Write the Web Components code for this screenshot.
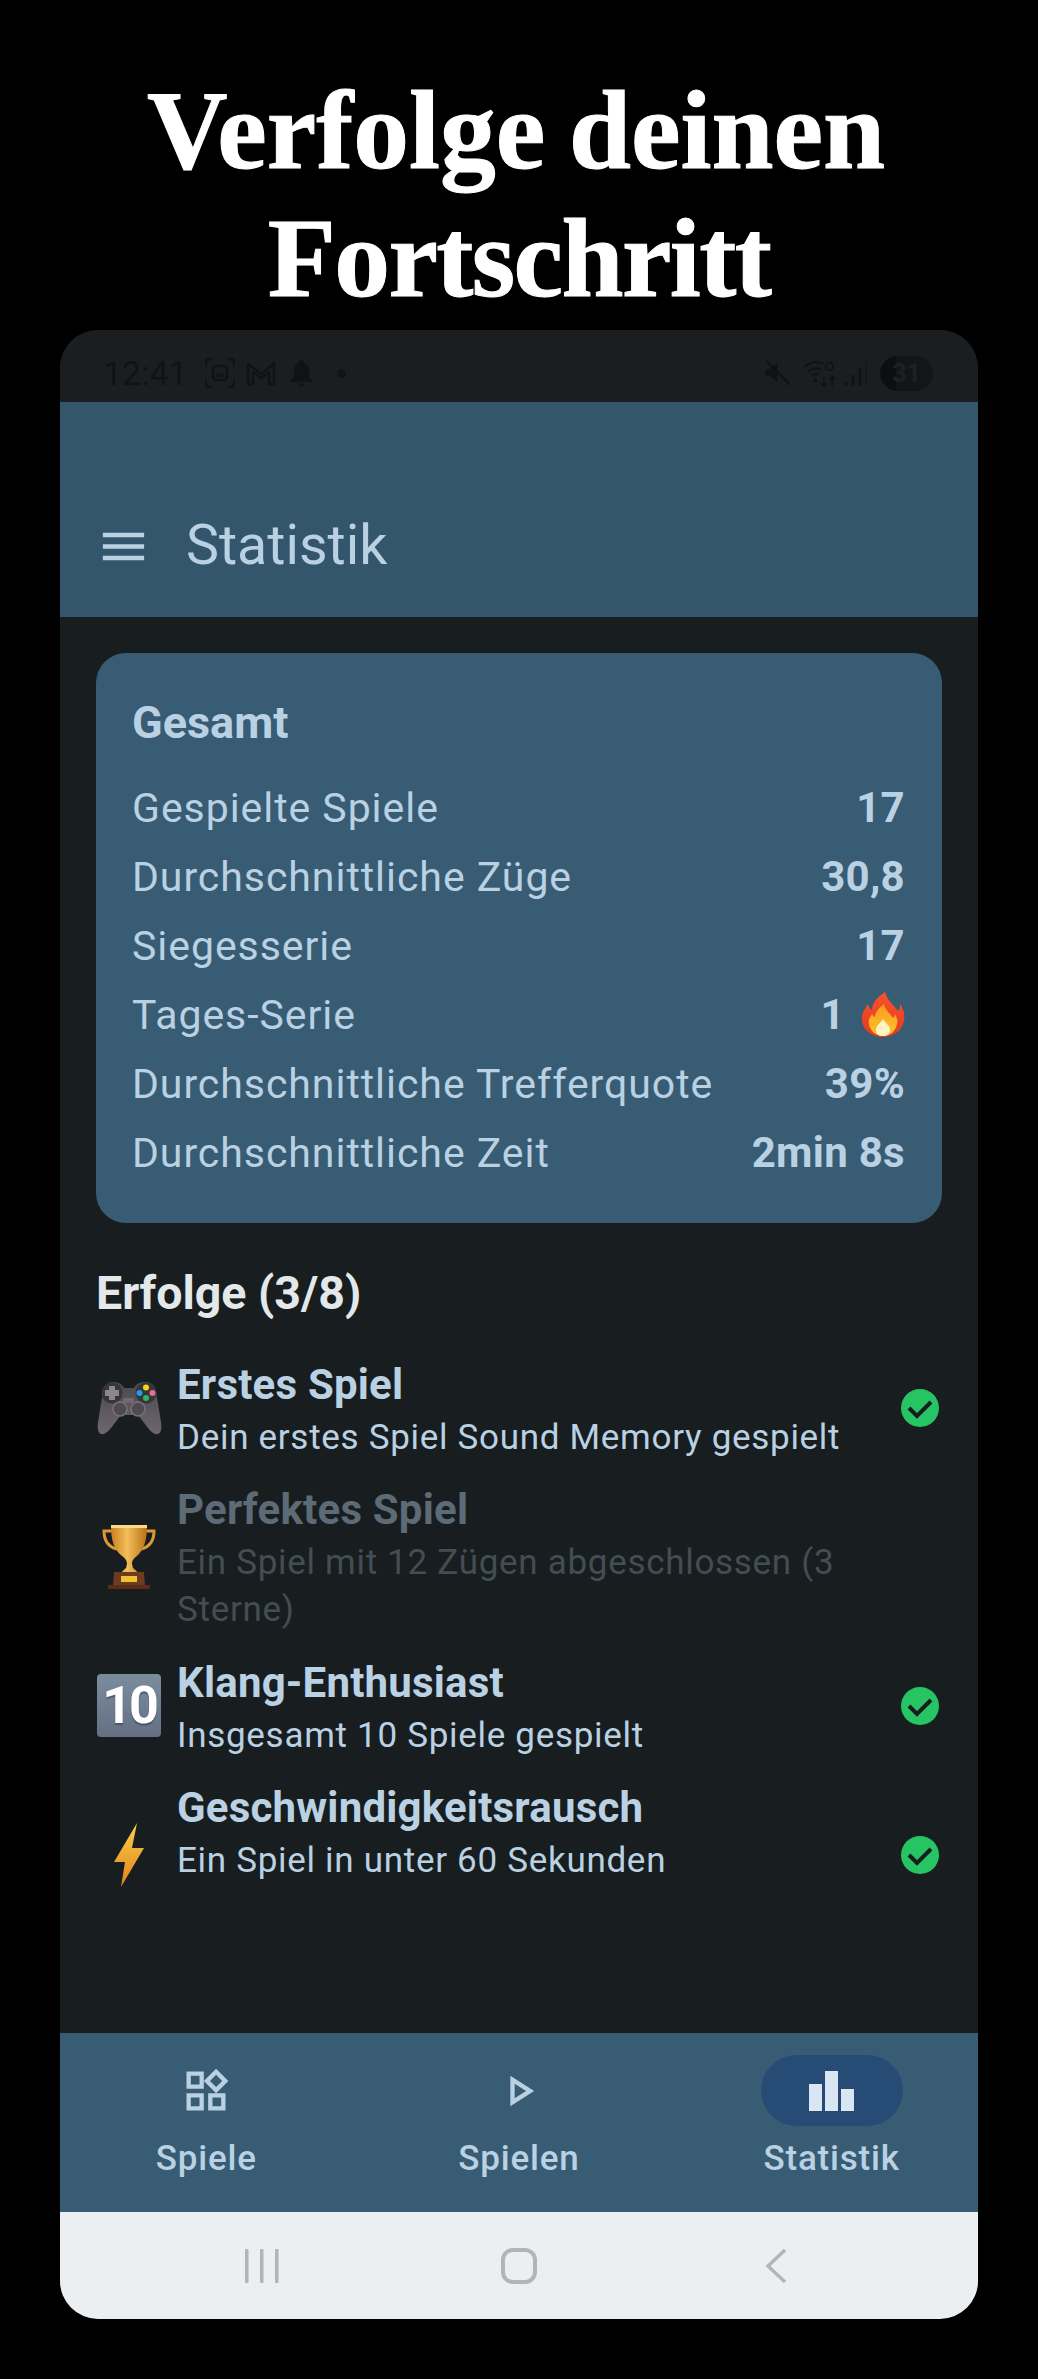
<!DOCTYPE html>
<html lang="de">
<head>
<meta charset="utf-8">
<title>Statistik</title>
<style>
    html, body { margin: 0; padding: 0; background: #000; }
    body { font-family: Roboto, "Liberation Sans", sans-serif; }
</style>
</head>
<body>
<promo-page>
    <promo-title slot="title"><span style="padding-right:6px">Verfolge deinen</span><br><span style="letter-spacing:-1.6px">Fortschritt</span></promo-title>
    <phone-frame>
        <status-bar slot="status"></status-bar>
        <app-bar slot="top" heading="Statistik"></app-bar>

        <stat-card heading="Gesamt">
            <stat-row label="Gespielte Spiele">17</stat-row>
            <stat-row label="Durchschnittliche Züge">30,8</stat-row>
            <stat-row label="Siegesserie">17</stat-row>
            <stat-row label="Tages-Serie">1 <emoji-icon name="fire"></emoji-icon></stat-row>
            <stat-row label="Durchschnittliche Trefferquote">39%</stat-row>
            <stat-row label="Durchschnittliche Zeit">2min 8s</stat-row>
        </stat-card>

        <achievement-list heading="Erfolge (3/8)">
            <achievement-item icon="gamepad" heading="Erstes Spiel" done>Dein erstes Spiel Sound Memory gespielt</achievement-item>
            <achievement-item icon="trophy" heading="Perfektes Spiel" locked>Ein Spiel mit 12 Zügen abgeschlossen (3 Sterne)</achievement-item>
            <achievement-item icon="ten" heading="Klang-Enthusiast" done>Insgesamt 10 Spiele gespielt</achievement-item>
            <achievement-item icon="bolt" heading="Geschwindigkeitsrausch" done tall>Ein Spiel in unter 60 Sekunden</achievement-item>
        </achievement-list>

        <bottom-nav slot="nav">
            <nav-item icon="widgets">Spiele</nav-item>
            <nav-item icon="play">Spielen</nav-item>
            <nav-item icon="bars" active>Statistik</nav-item>
        </bottom-nav>
        <system-nav slot="system"></system-nav>
    </phone-frame>
</promo-page>

<script>
// small helper, every component is just a template + open shadow root
function shadow(el, html) {
    let template = document.createElement('template');
    template.innerHTML = html;
    let root = el.attachShadow({mode: 'open'});
    root.appendChild(template.content.cloneNode(true));
    return root;
}

class PromoPage extends HTMLElement {
    constructor() {
        super();
        shadow(this, `
<style>
    :host { display:block; width:1038px; height:2379px; background:#000; overflow:hidden; }
    .phone { padding:0 60px; }
</style>
<slot name="title"></slot>
<div class="phone"><slot></slot></div>
`);
    }
}

class PromoTitle extends HTMLElement {
    constructor() {
        super();
        shadow(this, `
<style>
    :host {
        display:block;
        height:330px;
        box-sizing:border-box;
        padding-top:67px;
        text-align:center;
        color:#fff;
        font-family:"Liberation Serif", serif;
        font-weight:700;
        font-size:111.5px;
        line-height:128px;
        word-spacing:-4px;
        -webkit-text-stroke:1px #fff;
    }
</style>
<slot></slot>
`);
    }
}

class PhoneFrame extends HTMLElement {
    constructor() {
        super();
        shadow(this, `
<style>
    :host {
        display:flex;
        flex-direction:column;
        height:1989px;
        background:#181d1f;
        border-radius:38px;
        overflow:hidden;
    }
    .content {
        flex:1;
        min-height:0;
        padding:36px 36px 0;
        display:flex;
        flex-direction:column;
    }
</style>
<slot name="status"></slot>
<slot name="top"></slot>
<div class="content"><slot></slot></div>
<slot name="nav"></slot>
<slot name="system"></slot>
`);
    }
}

class StatusBar extends HTMLElement {
    constructor() {
        super();
        shadow(this, `
<style>
    :host {
        display:flex;
        align-items:center;
        height:72px;
        box-sizing:border-box;
        padding:14px 45px 0 43px;
        color:#101314;
        background:#1a1e20;
        font-size:34px;
        font-family:Roboto, sans-serif;
    }
    svg { display:block; flex:none; }
    .left, .right { display:flex; align-items:center; }
    .right { margin-left:auto; }
    .battery {
        width:53px; height:35px; border-radius:18px;
        display:flex; align-items:center; justify-content:center;
        font-size:25px; font-weight:700;
        color:#1d2123;
        background:linear-gradient(90deg,#0c0e0f 0 30%,#131617 30% 100%);
    }
</style>
<div class="left">
    <span class="time" style="margin-right:17px">12:41</span>
    <svg width="30" height="30" viewBox="0 0 30 30" fill="none" stroke="currentColor" stroke-width="2.4" style="margin-right:11px">
        <path d="M1 8V4q0-3 3-3h3M23 1h3q3 0 3 3v4M29 22v4q0 3-3 3h-3M7 29H4q-3 0-3-3v-4"/>
        <rect x="8" y="8" width="14" height="14" rx="3"/>
        <path d="M10 19l3-5 2 3 2-2 3 4z" fill="currentColor" stroke="none"/>
    </svg>
    <svg width="30" height="26" viewBox="0 0 30 26" fill="none" stroke="currentColor" style="margin-right:14px">
        <path d="M2 24V3.5L15 14 28 3.5V24h-5V12l-8 6-8-6v12z" stroke-linejoin="round" stroke-width="2.4"/>
    </svg>
    <svg width="23" height="28" viewBox="0 0 24 28" fill="currentColor" style="margin-right:24px">
        <path d="M12 0q2 0 2 2v1q6 2 6 9v7l4 3v1H0v-1l4-3v-7q0-7 6-9V2q0-2 2-2zM9 25h6q-1 3-3 3t-3-3z"/>
    </svg>
    <svg width="9" height="9" viewBox="0 0 9 9" fill="currentColor">
        <circle cx="4.5" cy="4.5" r="4"/>
    </svg>
</div>
<div class="right">
    <svg width="25" height="26" viewBox="0 0 26 26" fill="currentColor" style="margin-right:13px">
        <path d="M0 9h5l8-7v20l-8-6H0z"/>
        <path d="M2 1l24 24" stroke="currentColor" stroke-width="2.6"/>
    </svg>
    <svg width="33" height="30" viewBox="0 0 35 30" fill="none" stroke="currentColor" stroke-width="2.2" style="margin-right:9px">
        <path d="M1 9q10-9 21-4M5 14q7-6 14-3M9 18q4-3 8-2"/>
        <circle cx="13" cy="23" r="2" fill="currentColor" stroke="none"/>
        <path d="M22 19v10m-3-3l3 3 3-3M31 29V19m-3 3l3-3 3 3" stroke-width="1.8"/>
        <circle cx="28" cy="8" r="4" stroke-width="1.8"/>
    </svg>
    <svg width="23" height="28" viewBox="0 0 24 28" fill="currentColor" style="margin-right:12px">
        <rect x="0" y="23" width="3" height="4"/>
        <rect x="7" y="16" width="3" height="11"/>
        <rect x="14" y="9" width="3" height="18"/>
        <rect x="21" y="2" width="2" height="25" opacity=".5"/>
    </svg>
    <span class="battery">31</span>
</div>
`);
    }
}

class AppBar extends HTMLElement {
    constructor() {
        super();
        let root = shadow(this, `
<style>
    :host {
        display:flex;
        align-items:center;
        height:215px;
        box-sizing:border-box;
        padding:73px 0 0 36px;
        background:#34566d;
        color:#b9d1e2;
    }
    svg { display:block; margin:0 35px 0 0; }
    h1 { margin:0; font:400 55.5px/1 Roboto, sans-serif; }
</style>
<svg width="55" height="55" viewBox="0 0 24 24" fill="currentColor"><path d="M3 18h18v-2H3v2zm0-5h18v-2H3v2zm0-7v2h18V6H3z"/></svg>
<h1></h1>
`);
        root.querySelector('h1').textContent = this.getAttribute('heading');
    }
}

class StatCard extends HTMLElement {
    constructor() {
        super();
        let root = shadow(this, `
<style>
    :host {
        display:block;
        height:570px;
        box-sizing:border-box;
        padding:37px 37px 33px 36px;
        background:#385c74;
        border-radius:30px;
        color:#b9d1e2;
    }
    h2 { margin:0 0 17px; font:700 45px/66px Roboto, sans-serif; }
</style>
<h2></h2>
<slot></slot>
`);
        root.querySelector('h2').textContent = this.getAttribute('heading');
    }
}

class StatRow extends HTMLElement {
    constructor() {
        super();
        let root = shadow(this, `
<style>
    :host {
        display:flex;
        justify-content:space-between;
        align-items:center;
        height:69px;
        font-size:41px;
        letter-spacing:.95px;
    }
    .value { display:flex; align-items:center; gap:16px; font-size:42px; font-weight:700; letter-spacing:.3px; }
</style>
<span class="label"></span>
<span class="value"><slot></slot></span>
`);
        root.querySelector('.label').textContent = this.getAttribute('label');
    }
}

class EmojiIcon extends HTMLElement {
    constructor() {
        super();
        let name = this.getAttribute('name');
        shadow(this, `
<style>
    :host { display:block; flex:none; }
    svg { display:block; }
    .ten {
        width:64px; height:63px; border-radius:4px;
        display:flex; align-items:center; justify-content:center;
        background:linear-gradient(180deg,#7a8d9d,#656f84);
        color:#fff;
        font:700 52px/1 Roboto, sans-serif;
        letter-spacing:-3px;
        text-shadow:0 2px 1px rgba(40,50,60,.5);
    }
</style>
${EmojiIcon.art[name]}
`);
    }
}
EmojiIcon.art = {
    fire: `<svg width="44" height="45" viewBox="0 0 44 45">
        <defs><linearGradient id="f" x1="0" y1="0" x2="0" y2="1"><stop offset="0" stop-color="#f8532c"/><stop offset="1" stop-color="#e23a1f"/></linearGradient>
        <linearGradient id="g" x1="0" y1="0" x2="0" y2="1"><stop offset="0" stop-color="#fa9a1e"/><stop offset="1" stop-color="#fcc52c"/></linearGradient></defs>
        <path fill="url(#f)" d="M24 0c2 8 8 12 13 19 2-3 2-5 2-7 4 6 5 11 4 17-2 10-11 16-21 16S2 39 1 29c-1-7 3-12 6-17 1 3 2 5 4 6 0-8 6-13 13-18z"/>
        <path fill="url(#g)" d="M23 12c1 6 6 9 9 14 1-1 2-2 2-4 2 4 3 7 2 10-1 7-7 12-14 12S9 39 8 32c-1-4 1-7 3-10 1 2 2 3 3 3 0-5 4-9 9-13z"/>
        <path fill="#fff3c4" d="M22 27c2 4 7 6 7 11 0 4-3 6-7 6s-7-2-7-6c0-5 5-7 7-11z"/>
    </svg>`,
    gamepad: `<svg width="66" height="54" viewBox="0 0 66 54">
        <defs><linearGradient id="p" x1="0" y1="0" x2="0" y2="1"><stop offset="0" stop-color="#4a494c"/><stop offset="1" stop-color="#6e6670"/></linearGradient></defs>
        <path fill="url(#p)" d="M17 1c5 0 9 2 11 6h10c2-4 6-6 11-6 7 0 10 4 11 9l5 31c1 6 0 11-3 12-4 1-8-3-13-10l-7-9H25l-7 9C13 50 9 54 5 53c-3-1-4-6-3-12L7 10C8 5 11 1 17 1z"/>
        <circle cx="16" cy="12" r="10.5" fill="#363538"/>
        <circle cx="50" cy="12" r="10.5" fill="#363538"/>
        <path fill="#8a888c" d="M13 5h6v4h4v6h-4v4h-6v-4H9V9h4z"/>
        <rect x="27" y="17" width="11" height="5" rx="2" fill="#6e6b70"/>
        <circle cx="24" cy="28" r="7" fill="#4d4a50" stroke="#767278" stroke-width="1.5"/>
        <circle cx="42" cy="28" r="7" fill="#4d4a50" stroke="#767278" stroke-width="1.5"/>
        <circle cx="50" cy="6.5" r="3" fill="#f5d31e"/>
        <circle cx="43.5" cy="12" r="3" fill="#1d9ee6"/>
        <circle cx="56.5" cy="12" r="3" fill="#ee6a96"/>
        <circle cx="50" cy="17" r="3" fill="#2fb56a"/>
    </svg>`,
    trophy: `<svg width="54" height="64" viewBox="0 0 54 64">
        <defs><linearGradient id="t" x1="0" y1="0" x2="1" y2="0"><stop offset="0" stop-color="#c98120"/><stop offset=".45" stop-color="#f3be5a"/><stop offset="1" stop-color="#b87216"/></linearGradient></defs>
        <path fill="none" stroke="#d99a33" stroke-width="3" d="M12 6H2c0 10 5 16 13 18M42 6h10c0 10-5 16-13 18"/>
        <path fill="url(#t)" d="M9 1h36c0 14-3 24-10 30-4 3-5 5-5 8l1 4c2 2 4 3 5 5H19c1-2 3-3 5-5l1-4c0-3-1-5-5-8C12 25 9 15 9 1z"/>
        <rect x="9" y="0" width="36" height="3" fill="#f9d98c"/>
        <path fill="#6e3a20" d="M12 47h30l1 14H11z"/>
        <rect x="6" y="60" width="42" height="4" rx="1" fill="#5a2d18"/>
        <rect x="19" y="51" width="16" height="6" fill="#f0c22c"/>
    </svg>`,
    ten: `<div class="ten">10</div>`,
    bolt: `<svg width="30" height="64" viewBox="0 0 30 64">
        <defs><linearGradient id="b" x1="0" y1="0" x2="0" y2="1"><stop offset="0" stop-color="#fbd04b"/><stop offset="1" stop-color="#e0821c"/></linearGradient></defs>
        <path fill="url(#b)" d="M23 0L0 39h11L7 64 30 25H18z"/>
    </svg>`
};

class AchievementList extends HTMLElement {
    constructor() {
        super();
        let root = shadow(this, `
<style>
    :host { display:block; margin-top:40px; }
    h2 { margin:0 0 31.5px; font:700 46.5px/60px Roboto, sans-serif; color:#e3e8ea; }
    .items { display:flex; flex-direction:column; gap:19.5px; }
</style>
<h2></h2>
<div class="items"><slot></slot></div>
`);
        root.querySelector('h2').textContent = this.getAttribute('heading');
    }
}

class AchievementItem extends HTMLElement {
    constructor() {
        super();
        let done = this.hasAttribute('done');
        let root = shadow(this, `
<style>
    :host { display:flex; align-items:center; color:#b9d1e2; }
    .icon { width:66px; flex:none; display:flex; justify-content:center; margin-right:15px; }
    .text { flex:1; min-width:0; }
    .name { font:700 42px/59px Roboto, sans-serif; letter-spacing:.2px; }
    .desc { font:400 35px/47px Roboto, sans-serif; letter-spacing:.7px; }
    .check { flex:none; display:block; margin:0 3px 0 30px; }
    :host([locked]) .name { color:#5c6b76; }
    :host([locked]) .desc { color:#434d54; }
    :host([locked]) .text { padding-right:71px; }
    :host([tall]) .text { min-height:153px; }
</style>
<div class="icon"><emoji-icon name="${this.getAttribute('icon')}"></emoji-icon></div>
<div class="text">
    <div class="name"></div>
    <div class="desc"><slot></slot></div>
</div>
${done ? `<svg class="check" width="38" height="38" viewBox="0 0 38 38">
    <circle cx="19" cy="19" r="19" fill="#27c464"/>
    <path d="M8 19l8 8 14-14" fill="none" stroke="#181d1f" stroke-width="4"/>
</svg>` : ''}
`);
        root.querySelector('.name').textContent = this.getAttribute('heading');
    }
}

class BottomNav extends HTMLElement {
    constructor() {
        super();
        shadow(this, `
<style>
    :host {
        display:flex;
        gap:20px;
        height:179px;
        background:#385c74;
    }
    ::slotted(*) { flex:1; }
</style>
<slot></slot>
`);
    }
}

class NavItem extends HTMLElement {
    constructor() {
        super();
        let icon = this.getAttribute('icon');
        shadow(this, `
<style>
    :host {
        display:flex;
        flex-direction:column;
        align-items:center;
        padding-top:22px;
        color:#b9d1e2;
        font:500 35px/40px Roboto, sans-serif;
        letter-spacing:.8px;
    }
    .pill {
        width:142px; height:71px;
        display:flex; align-items:center; justify-content:center;
        border-radius:36px;
        margin-bottom:13px;
    }
    :host([active]) .pill { background:#264b74; }
    svg { display:block; }
</style>
<div class="pill">${NavItem.icons[icon]}</div>
<slot></slot>
`);
    }
}
NavItem.icons = {
    widgets: `<svg width="52" height="52" viewBox="0 0 24 24" fill="currentColor"><path d="M16.66 4.52l2.83 2.83-2.83 2.83-2.83-2.83 2.83-2.83M9 5v4H5V5h4m10 10v4h-4v-4h4M9 15v4H5v-4h4m7.66-13.31L11 7.34 16.66 13l5.66-5.66-5.66-5.65zM11 3H3v8h8V3zm10 10h-8v8h8v-8zm-10 0H3v8h8v-8z"/></svg>`,
    play: `<svg width="52" height="52" viewBox="0 0 24 24" fill="currentColor"><path d="M10 8.64L15.27 12 10 15.36V8.64M8 5v14l11-7L8 5z"/></svg>`,
    bars: `<svg width="45" height="40" viewBox="0 0 45 40" fill="#dbe6f4"><rect x="0" y="13" width="13" height="27"/><rect x="16" y="0" width="13" height="40"/><rect x="32" y="18" width="13" height="22"/></svg>`
};

class SystemNav extends HTMLElement {
    constructor() {
        super();
        shadow(this, `
<style>
    :host {
        display:grid;
        grid-template-columns:repeat(3, 1fr);
        align-items:center;
        justify-items:center;
        height:107px;
        padding:0 73px;
        background:#ebeff2;
    }
    svg { display:block; }
</style>
<svg width="34" height="34" viewBox="0 0 34 34" fill="#b2b4b5"><rect x="0" y="0" width="3.5" height="34" rx="1"/><rect x="15" y="0" width="3.5" height="34" rx="1"/><rect x="30" y="0" width="3.5" height="34" rx="1"/></svg>
<svg width="36" height="36" viewBox="0 0 36 36" fill="none" stroke="#b2b4b5" stroke-width="4"><rect x="2" y="2" width="32" height="32" rx="10"/></svg>
<svg width="22" height="36" viewBox="0 0 22 36" fill="none" stroke="#b2b4b5" stroke-width="3.4"><path d="M20 2L3 18l17 16"/></svg>
`);
    }
}

customElements.define('promo-page', PromoPage);
customElements.define('promo-title', PromoTitle);
customElements.define('phone-frame', PhoneFrame);
customElements.define('status-bar', StatusBar);
customElements.define('app-bar', AppBar);
customElements.define('stat-card', StatCard);
customElements.define('stat-row', StatRow);
customElements.define('emoji-icon', EmojiIcon);
customElements.define('achievement-list', AchievementList);
customElements.define('achievement-item', AchievementItem);
customElements.define('bottom-nav', BottomNav);
customElements.define('nav-item', NavItem);
customElements.define('system-nav', SystemNav);
</script>
</body>
</html>
